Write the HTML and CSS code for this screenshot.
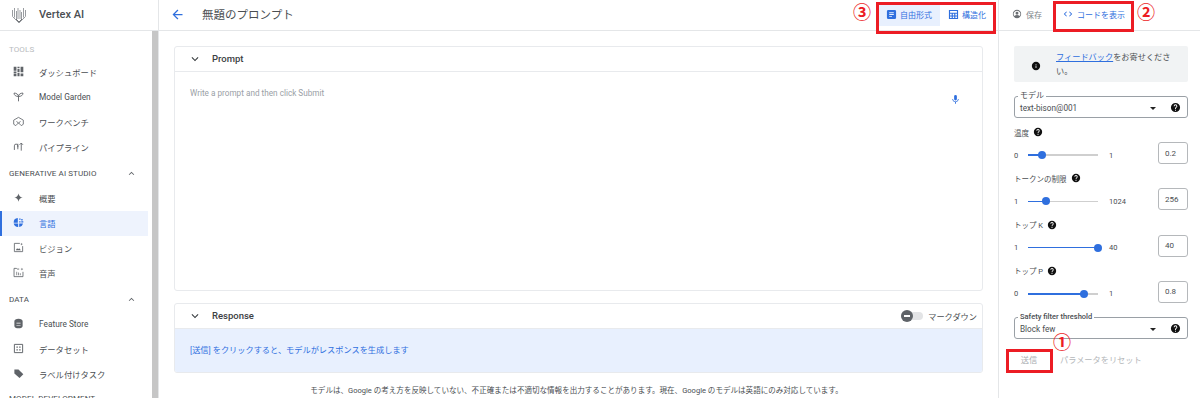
FILE: index.html
```html
<!DOCTYPE html>
<html lang="ja">
<head>
<meta charset="utf-8">
<title>Vertex AI</title>
<link rel="stylesheet" href="styles.css">
</head>
<body>
<div class="app">
  <header class="brand">
    <svg class="logo" viewBox="0 0 14 17" width="14" height="17"><g fill="none" stroke="#9a9da1" stroke-width="1"><path d="M.5 3v6.500L7 16l6.500-6.500V3"/><path d="M2.500 1v9.500M4.500 4v8M6 1v11M8 3v9M9.500 5v7M11.500 1v9.500"/><path d="M4 12l3 3 3-3" stroke="#6f7276"/></g></svg>
    <span class="brand-name">Vertex AI</span>
  </header>
  <header class="titlebar">
    <svg class="back" viewBox="0 0 24 24" width="15" height="15"><path fill="#2f6fde" d="M20 11H7.830l5.590-5.590L12 4l-8 8 8 8 1.410-1.410L7.830 13H20z"/></svg>
    <h1 class="page-title">無題のプロンプト</h1>
    <div class="modes">
      <span class="mode mode-on"><svg viewBox="0 0 24 24" width="11" height="11"><path fill="#2f6fde" d="M5 2h14a3 3 0 0 1 3 3v14a3 3 0 0 1-3 3H5a3 3 0 0 1-3-3V5a3 3 0 0 1 3-3zm2 5v2h10V7zm0 4v2h10v-2zm0 4v2h6v-2z"/></svg>自由形式</span>
      <span class="mode mode-last"><svg viewBox="0 0 24 24" width="11" height="11"><path fill="#2f6fde" d="M2 2h20v20H2zm2.500 2.500V8h15V4.500zm0 6V14H8v-3.500zm6 0V14h3v-3.500zm5.500 0V14h3.500v-3.500zm-11.500 6v3H8v-3zm6 0v3h3v-3zm5.500 0v3h3.500v-3z"/></svg>構造化</span>
    </div>
  </header>
  <header class="actions">
    <span class="act act-save"><svg viewBox="0 0 24 24" width="10" height="10"><path fill="#6b6f73" d="M12 2a10 10 0 1 0 0 20 10 10 0 0 0 0-20zm0 2a8 8 0 0 1 6.300 12.900C16.800 15.200 14.500 14.500 12 14.500s-4.800.7-6.300 2.400A8 8 0 0 1 12 4zm0 2.500a3.500 3.500 0 1 0 0 7 3.500 3.500 0 0 0 0-7z"/></svg>保存</span>
    <span class="act act-code"><svg viewBox="0 0 24 24" width="10" height="10"><path fill="#2f6fde" d="M9.400 16.600 4.800 12l4.600-4.600L8 6l-6 6 6 6zm5.200 0 4.600-4.600-4.600-4.600L16 6l6 6-6 6z"/></svg>コードを表示</span>
  </header>

  <aside class="side">
    <nav class="nav">
      <div class="sec sec-muted">TOOLS</div>
      <a class="item"><svg viewBox="0 0 16 16" width="11" height="11"><path fill="#5f6368" d="M1 1h4v6H1zm0 7h4v2H1zm0 3h4v4H1zm5.500-10h3v2h-3zm0 3h3v5h-3zm0 6h3v5h-3zM11 1h4v8h-4zm0 10h4v4h-4z"/></svg>ダッシュボード</a>
      <a class="item"><svg viewBox="0 0 16 16" width="11" height="11"><path fill="none" stroke="#5f6368" stroke-width="1.300" d="M8 15V8M8 8C8 5 5 3 1.500 3 1.500 6 4 8 8 8zM8 8c0-3 2.500-5 6.500-5C14.500 6 12 8 8 8z"/></svg>Model Garden</a>
      <a class="item"><svg viewBox="0 0 16 16" width="11" height="11"><path fill="none" stroke="#5f6368" stroke-width="1.200" d="M1 6l7-4 7 4v6l-3 2-4-4-4 4-3-2zM5 8l3 2 3-2"/></svg>ワークベンチ</a>
      <a class="item"><svg viewBox="0 0 16 16" width="11" height="11"><path fill="none" stroke="#5f6368" stroke-width="1.300" d="M2 13V7a2.500 2.500 0 0 1 5 0v2M7 4v8M12 14V3M9.500 5.500 12 3l2.500 2.500"/></svg>パイプライン</a>
      <div class="sec">GENERATIVE AI STUDIO<svg class="chev" viewBox="0 0 24 24" width="11" height="11"><path fill="#5f6368" d="M12 8l-6 6 1.410 1.410L12 10.830l4.590 4.580L18 14z"/></svg></div>
      <a class="item"><svg viewBox="0 0 16 16" width="11" height="11"><path fill="#5f6368" d="M8 2c.6 3.400 2.600 5.400 6 6-3.400.6-5.400 2.600-6 6-.6-3.400-2.600-5.400-6-6 3.400-.6 5.400-2.600 6-6z"/></svg>概要</a>
      <a class="item item-on"><svg viewBox="0 0 16 16" width="11" height="11"><path fill="#2f6fde" d="M7 1.500v6.800H1A6.600 6.600 0 0 1 7 1.500zM1 9.500h6.500v5A6.500 6.500 0 0 1 1 9.500zM9 9.500h5.500A6.500 6.500 0 0 1 9 14.500zM9 2h2v2H9zm3 1h2v2h-2zm-3 3h2v2H9zm3 0h3v2h-3z"/></svg>言語</a>
      <a class="item"><svg viewBox="0 0 16 16" width="11" height="11"><path fill="none" stroke="#5f6368" stroke-width="1.200" d="M10 2H2v12h12V6"/><path fill="#5f6368" d="M4 12l2-3 1.500 1.500L9 9l2.500 3zM12.500 1l.5 1.500 1.500.5-1.500.5-.5 1.500-.5-1.500L10.500 3l1.500-.5z"/></svg>ビジョン</a>
      <a class="item"><svg viewBox="0 0 16 16" width="11" height="11"><path fill="none" stroke="#5f6368" stroke-width="1.200" d="M9 3H6L5 2H1.500v12h13V7"/><path fill="#5f6368" d="M5 7h1v5H5zm2.500 1h1v4h-1zm2.500 1h1v3h-1zM13 1l.5 1.500L15 3l-1.500.5L13 5l-.5-1.500L11 3l1.500-.5z"/></svg>音声</a>
      <div class="sec">DATA<svg class="chev" viewBox="0 0 24 24" width="11" height="11"><path fill="#5f6368" d="M12 8l-6 6 1.410 1.410L12 10.830l4.590 4.580L18 14z"/></svg></div>
      <a class="item"><svg viewBox="0 0 16 16" width="11" height="11"><path fill="#5f6368" d="M8 1c3.500 0 6 1.500 6 3.500v7c0 2-2.500 3.500-6 3.500s-6-1.500-6-3.500v-7C2 2.500 4.500 1 8 1zM5 7v1h6V7zm0 3v1h6v-1z"/></svg>Feature Store</a>
      <a class="item"><svg viewBox="0 0 16 16" width="11" height="11"><path fill="none" stroke="#5f6368" stroke-width="1.400" d="M2 2h12v12H2z"/><path fill="#5f6368" d="M5 5h2v2H5zm4 0h2v2H9zM5 9h2v2H5zm4 0h2v2H9z"/></svg>データセット</a>
      <a class="item"><svg viewBox="0 0 16 16" width="11" height="11"><path fill="#5f6368" d="M2 2h6l7 7-5.500 5.500L2 8z"/></svg>ラベル付けタスク</a>
      <div class="sec sec-last">MODEL DEVELOPMENT</div>
    </nav>
    <div class="thumb-bar"></div>
  </aside>

  <main class="main">
    <section class="card card-prompt">
      <div class="card-head">
        <svg viewBox="0 0 24 24" width="14" height="14"><path fill="#3c4043" d="M16.590 8.590 12 13.170 7.410 8.590 6 10l6 6 6-6z"/></svg>
        <span class="card-title">Prompt</span>
      </div>
      <div class="prompt-body">
        <span class="placeholder">Write a prompt and then click Submit</span>
        <svg viewBox="0 0 24 24" width="11" height="11"><path fill="#2f6fde" d="M12 14a3 3 0 0 0 3-3V5a3 3 0 0 0-6 0v6a3 3 0 0 0 3 3zm5.300-3c0 3-2.500 5.100-5.300 5.100S6.700 14 6.700 11H5c0 3.400 2.700 6.200 6 6.700V21h2v-3.300c3.300-.5 6-3.300 6-6.700z"/></svg>
      </div>
    </section>
    <section class="card card-response">
      <div class="card-head">
        <svg viewBox="0 0 24 24" width="14" height="14"><path fill="#3c4043" d="M16.590 8.590 12 13.170 7.410 8.590 6 10l6 6 6-6z"/></svg>
        <span class="card-title">Response</span>
        <span class="switch"><span class="switch-knob"></span></span>
        <span class="switch-label">マークダウン</span>
      </div>
      <div class="response-body">[送信] をクリックすると、モデルがレスポンスを生成します</div>
    </section>
    <p class="notice">モデルは、Google の考え方を反映していない、不正確または不適切な情報を出力することがあります。現在、Google のモデルは英語にのみ対応しています。</p>
  </main>

  <aside class="panel">
    <div class="feedback">
      <svg viewBox="0 0 24 24" width="10" height="10"><path fill="#111" d="M12 2a10 10 0 1 0 0 20 10 10 0 0 0 0-20zm1 15h-2v-6h2zm0-8h-2V7h2z"/></svg>
      <p class="feedback-text"><a class="link">フィードバック</a>をお寄せください。</p>
    </div>
    <fieldset class="select select-model">
      <legend>モデル</legend>
      <span class="select-value">text-bison@001</span>
      <span class="caret"></span>
      <svg class="help" viewBox="0 0 24 24" width="11" height="11"><use href="#q"/></svg>
    </fieldset>

    <div class="param param-first">
      <div class="param-label">温度<svg class="help" viewBox="0 0 24 24" width="10" height="10"><use href="#q"/></svg></div>
      <div class="param-row">
        <span class="lo">0</span>
        <span class="track"><span class="fill" style="width:20%"></span><span class="knob"></span><span class="rest"></span></span>
        <span class="hi">1</span>
        <span class="num">0.2</span>
      </div>
    </div>
    <div class="param">
      <div class="param-label">トークンの制限<svg class="help" viewBox="0 0 24 24" width="10" height="10"><use href="#q"/></svg></div>
      <div class="param-row">
        <span class="lo">1</span>
        <span class="track"><span class="fill" style="width:25%"></span><span class="knob"></span><span class="rest"></span></span>
        <span class="hi">1024</span>
        <span class="num">256</span>
      </div>
    </div>
    <div class="param">
      <div class="param-label">トップ K<svg class="help" viewBox="0 0 24 24" width="10" height="10"><use href="#q"/></svg></div>
      <div class="param-row">
        <span class="lo">1</span>
        <span class="track"><span class="fill" style="width:100%"></span><span class="knob"></span><span class="rest"></span></span>
        <span class="hi">40</span>
        <span class="num">40</span>
      </div>
    </div>
    <div class="param">
      <div class="param-label">トップ P<svg class="help" viewBox="0 0 24 24" width="10" height="10"><use href="#q"/></svg></div>
      <div class="param-row">
        <span class="lo">0</span>
        <span class="track"><span class="fill" style="width:80%"></span><span class="knob"></span><span class="rest"></span></span>
        <span class="hi">1</span>
        <span class="num">0.8</span>
      </div>
    </div>

    <fieldset class="select select-safety">
      <legend>Safety filter threshold</legend>
      <span class="select-value">Block few</span>
      <span class="caret"></span>
      <svg class="help" viewBox="0 0 24 24" width="11" height="11"><use href="#q"/></svg>
    </fieldset>
    <div class="buttons">
      <span class="btn btn-send">送信</span>
      <span class="btn btn-reset">パラメータをリセット</span>
    </div>
  </aside>
</div>

<svg class="defs" width="0" height="0"><defs><path id="q" fill="#111" d="M12 2a10 10 0 1 0 0 20 10 10 0 0 0 0-20zm1 17h-2v-2h2zm2.100-7.700-.9.900c-.7.700-1.200 1.300-1.200 2.800h-2v-.5c0-1.100.5-2.100 1.200-2.800l1.200-1.300c.4-.3.600-.8.600-1.400a2 2 0 0 0-4 0H8a4 4 0 0 1 8 0c0 .9-.4 1.700-.9 2.300z"/></defs></svg>

<div class="mark mark-3"></div><span class="circled circled-3">③</span>
<div class="mark mark-2"></div><span class="circled circled-2">②</span>
<div class="mark mark-1"></div><span class="circled circled-1">①</span>
</body>
</html>
```

FILE: styles.css
```css
* { box-sizing: border-box; }
html, body { margin: 0; padding: 0; background: #fff; }
body {
  width: 1200px;
  height: 406px;
  overflow: hidden;
  position: relative;
  font-family: Roboto, "Noto Sans CJK JP", sans-serif;
  color: #4a4e52;
}
.app {
  display: grid;
  grid-template-columns: 159px 840px 201px;
  grid-template-rows: 31px 367px;
  width: 1200px;
  height: 398px;
}
.brand, .titlebar, .actions { display: flex; align-items: center; padding-bottom: 2px; border-bottom: 1px solid #e4e6e8; }
.brand { border-right: 1px solid #e4e6e8; padding-left: 12px; }
.logo { margin-right: 13px; margin-top: 2px; }
.brand-name { font-size: 11px; font-weight: 500; color: #4a4e52; }
.titlebar { padding-left: 11px; border-right: 1px solid #e4e6e8; }
.back { margin-right: 17px; }
.page-title { margin: 0; font-size: 11.500px; font-weight: 400; color: #4a4e52; }
.modes { display: flex; align-items: center; height: 23px; margin-left: auto; margin-right: 12px; font-size: 8px; color: #2f6fde; }
.mode { display: flex; align-items: center; gap: 3px; height: 100%; padding: 0 8px 0 8px; }
.mode-on { background: #e8f0fe; }
.mode-last { padding-right: 0; }
.actions { padding-left: 13px; font-size: 8px; }
.act { display: flex; align-items: center; gap: 4px; }
.act-save { color: #80868b; }
.act-code { color: #2f6fde; margin-left: 21px; }

.side { display: flex; border-right: 1px solid #e4e6e8; overflow: hidden; }
.nav { width: 152px; flex: none; overflow: hidden; }
.thumb-bar { width: 6px; background: #c6c6c6; }
.sec {
  display: flex;
  align-items: center;
  height: 26px;
  padding-left: 9px;
  padding-right: 15px;
  font-size: 8px;
  letter-spacing: .1px;
  color: #4a4e52;
}
.sec-muted { color: #b8bbbe; height: 29px; padding-top: 7px; }
.sec-last { margin-top: -2px; }
.chev { margin-left: auto; }
.item {
  display: flex;
  align-items: center;
  height: 25px;
  width: 148px;
  padding: 0 0 2px 13px;
  font-size: 8.300px;
  color: #4a4e52;
}
.item svg { margin-right: 15px; flex: none; }
.item-on { background: #eef3fd; color: #2f6fde; border-left: 2px solid #2f6fde; padding-left: 11px; }

.main { padding: 15px 15px 0; border-right: 1px solid #e4e6e8; display: flex; flex-direction: column; overflow: hidden; }
.card { border: 1px solid #e8eaed; border-radius: 3px; flex: none; overflow: hidden; }
.card-prompt { height: 245px; }
.card-response { height: 70px; margin-top: 12px; }
.card-head { display: flex; align-items: center; height: 25px; padding: 0 0 1px 13px; border-bottom: 1px solid #e8eaed; }
.card-title { margin-left: 10px; font-size: 9.500px; font-weight: 500; color: #3c4043; }
.prompt-body { display: flex; justify-content: space-between; padding: 16px 21px 0 15px; }
.placeholder { font-size: 8.200px; color: #9aa0a6; }
.prompt-body svg { margin-top: 6px; }
.switch { display: flex; align-items: center; width: 22px; height: 8px; margin-left: auto; background: #e3e4e6; border-radius: 4px; }
.switch-knob { position: relative; width: 12px; height: 12px; border-radius: 50%; background: #5f6368; flex: none; }
.switch-knob::after { content: ""; position: absolute; left: 3px; top: 5px; width: 6px; height: 2px; background: #fff; }
.switch-label { margin: 0 5px 0 5px; font-size: 8.200px; color: #4a4e52; }
.response-body { height: 44px; background: #e8f0fe; padding: 14px 15px 0; font-size: 8.200px; color: #2f6fde; }
.notice { margin: 11px 0 0; padding-right: 4px; text-align: center; font-size: 7.550px; color: #4a4e52; white-space: nowrap; }

.panel { padding: 15px 12px 0 15px; overflow: hidden; }
.feedback { display: flex; height: 36px; background: #f1f3f4; border-radius: 2px; padding: 4px 10px 0 17px; }
.feedback > svg { margin: 11px 15px 0 0; flex: none; }
.feedback-text { margin: 0; font-size: 8.200px; line-height: 14px; color: #4a4e52; }
.link { color: #2f6fde; text-decoration: underline; }
.select {
  display: flex;
  align-items: center;
  margin: 0;
  min-width: 0;
  border: 1px solid #9aa0a6;
  border-radius: 3px;
  padding: 0 6px 0 5px;
  height: 26px;
  font-size: 8.200px;
}
.select legend { padding: 0 2px; margin-left: -2px; font-size: 8px; line-height: 8px; color: #4a4e52; }
.select-model { margin-top: 10px; }
.select-safety { margin-top: 3px; }
.select-safety legend { font-weight: 500; font-size: 7.500px; }
.select-value { flex: 1; margin-top: -2px; }
.caret { width: 0; height: 0; border: 3px solid transparent; border-top: 3px solid #222; border-bottom: 0; margin-right: 14px; }
.select .help { margin: -2px 0 0; }

.param { height: 46.300px; }
.param-first { margin-top: 7px; }
.param-label { display: flex; align-items: center; gap: 4px; height: 14px; font-size: 7.500px; color: #4a4e52; }
.param-row { display: flex; align-items: center; height: 24px; margin-top: 4px; font-size: 7.500px; color: #4a4e52; }
.lo { width: 14px; flex: none; }
.track { display: flex; align-items: center; width: 70px; flex: none; }
.fill { height: 1.500px; background: #2f6fde; flex: none; }
.knob { width: 8px; height: 8px; margin: 0 -4px; background: #2f6fde; border-radius: 50%; flex: none; position: relative; }
.rest { flex: 1; height: 1.500px; background: #cfcfcf; }
.hi { margin-left: 11px; flex: 1; }
.num { display: flex; align-items: center; width: 30px; height: 22px; padding-left: 6px; margin-top: -4px; border: 1px solid #b5b8bb; border-radius: 3px; font-size: 8px; flex: none; }

.buttons { display: flex; align-items: center; height: 24px; margin-top: 8px; font-size: 8.200px; }
.btn-send { width: 46px; text-align: center; margin-left: -8px; color: #a9adb1; }
.btn-reset { margin-left: 8px; color: #b4b7ba; }

.defs { position: absolute; }
.mark { position: absolute; border: 3px solid #ec1c24; }
.mark-3 { left: 876px; top: 2px; width: 120px; height: 32px; }
.mark-2 { left: 1053px; top: 1px; width: 81px; height: 31px; }
.mark-1 { left: 1006px; top: 349px; width: 47px; height: 24px; }
.circled { position: absolute; color: #ec1c24; font-size: 18px; line-height: 20px; font-weight: 700; font-family: "Noto Sans CJK JP", sans-serif; }
.circled-3 { left: 853px; top: 1px; }
.circled-2 { left: 1137px; top: 1px; }
.circled-1 { left: 1053px; top: 331px; }
```
